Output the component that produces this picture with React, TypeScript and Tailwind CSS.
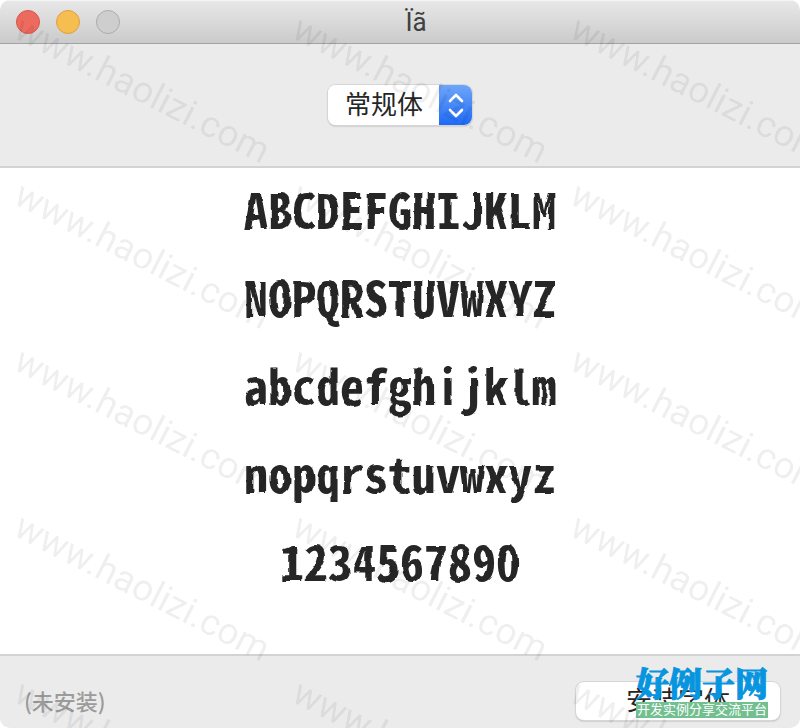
import React from "react";

const sampleRows = ["ABCDEFGHIJKLM", "NOPQRSTUVWXYZ", "abcdefghijklm", "nopqrstuvwxyz", "1234567890"];

const cjk = "font-['Liberation_Sans','Noto_Sans_CJK_SC',sans-serif]";

function TitleBar() {
  return (
    <header className="grid h-11 grid-cols-[1fr_auto_1fr] items-center border-b border-[#a3a3a3] bg-linear-to-b from-[#e8e8e8] to-[#cbcbcb] px-4 shadow-[inset_0_1px_0_#f5f5f5]">
      <div className="flex gap-4">
        <button type="button" aria-label="Close" className="size-6 rounded-full border border-[#d8554c] bg-[#ed6a5e]" />
        <button type="button" aria-label="Minimize" className="size-6 rounded-full border border-[#dda03c] bg-[#f6be50]" />
        <button type="button" aria-label="Zoom" disabled className="size-6 rounded-full border border-[#acacac] bg-[#cecece]" />
      </div>
      <h1 className="pl-8 font-[Roboto,sans-serif] text-[26px] leading-8 text-[#404040]">Ïã</h1>
    </header>
  );
}

function StylePicker() {
  return (
    <div className="flex h-[124px] items-center justify-center border-b-2 border-[#d3d3d3] bg-[#ebebeb]">
      <div className="relative h-10 w-36 overflow-hidden rounded-lg bg-white shadow-[0_0_0_1px_#d6d6d6,0_1px_2px_#9a9a9a]">
        <select aria-label="字体样式" className="h-10 w-full appearance-none bg-white pl-[17px] text-[26px] leading-10 text-[#262626] outline-none">
          <option>常规体</option>
        </select>
        <div className="pointer-events-none absolute inset-y-0 right-0 flex w-[33px] items-center justify-center bg-linear-to-b from-[#6ea5f8] to-[#1c69f5]">
          <svg width="18" height="26" viewBox="0 0 18 26" fill="none" stroke="white" strokeWidth="2.6" strokeLinecap="round" strokeLinejoin="round">
            <path d="M3 9L9 3L15 9M3 18L9 24L15 18" />
          </svg>
        </div>
      </div>
    </div>
  );
}

function Preview() {
  return (
    <main className="flex min-h-[486px] flex-col items-center bg-white">
      <svg className="absolute size-0" aria-hidden="true">
        <filter id="worn" x="-5%" y="-5%" width="110%" height="110%">
          <feTurbulence type="fractalNoise" baseFrequency="0.09" numOctaves="1" seed="7" result="noise" />
          <feDisplacementMap in="SourceGraphic" in2="noise" scale="4" xChannelSelector="R" yChannelSelector="G" />
          <feGaussianBlur stdDeviation="0.4" />
        </filter>
      </svg>
      {sampleRows.map((row) => (
        <p key={row} className="h-22 font-['Noto_Sans_Mono_CJK_SC','DejaVu_Sans_Mono',monospace] text-5xl leading-20 font-bold text-[#262626] [filter:url(#worn)]">
          {row}
        </p>
      ))}
    </main>
  );
}

function Footer() {
  return (
    <footer className="flex h-[74px] items-start justify-between border-t-2 border-[#d3d3d3] bg-[#ebebeb] pt-[26px] pr-5 pl-6">
      <p className="font-['Noto_Sans_CJK_SC',sans-serif] text-[22px] leading-9 font-medium text-[#9b9b9b]">(未安装)</p>
      <div className="relative">
        <button type="button" className="block h-[38px] w-[204px] rounded-lg bg-white text-[26px] leading-[38px] text-[#262626] shadow-[0_0_0_1px_#d6d6d6,0_1px_2px_#9a9a9a]">
          安装字体
        </button>
        <div className="absolute -top-4 right-3 w-[132px]">
          <p className="h-9 font-['Noto_Serif_CJK_SC','Noto_Sans_CJK_SC',serif] text-[33px] leading-8 font-black whitespace-nowrap text-[#0795e0] [-webkit-text-stroke:1px_#0795e0]">好例子网</p>
          <p className="h-4 bg-[#72c090] text-center text-[13px] leading-4 whitespace-nowrap text-white">开发实例分享交流平台</p>
        </div>
      </div>
    </footer>
  );
}

function Watermark() {
  return (
    <div aria-hidden="true" className="pointer-events-none absolute inset-0 grid auto-rows-[166px] grid-cols-[278px_278px_278px] overflow-hidden pt-1">
      {Array.from({ length: 15 }, (_, i) => (
        <div key={i} className="pl-2">
          <span className="block w-max origin-bottom-left rotate-27 font-[Roboto,sans-serif] text-[37px] leading-10 text-black/8">www.haolizi.com</span>
        </div>
      ))}
    </div>
  );
}

export default function App() {
  return (
    <div className={`relative w-full overflow-hidden rounded-[10px] ${cjk}`}>
      <TitleBar />
      <StylePicker />
      <Preview />
      <Footer />
      <Watermark />
    </div>
  );
}
